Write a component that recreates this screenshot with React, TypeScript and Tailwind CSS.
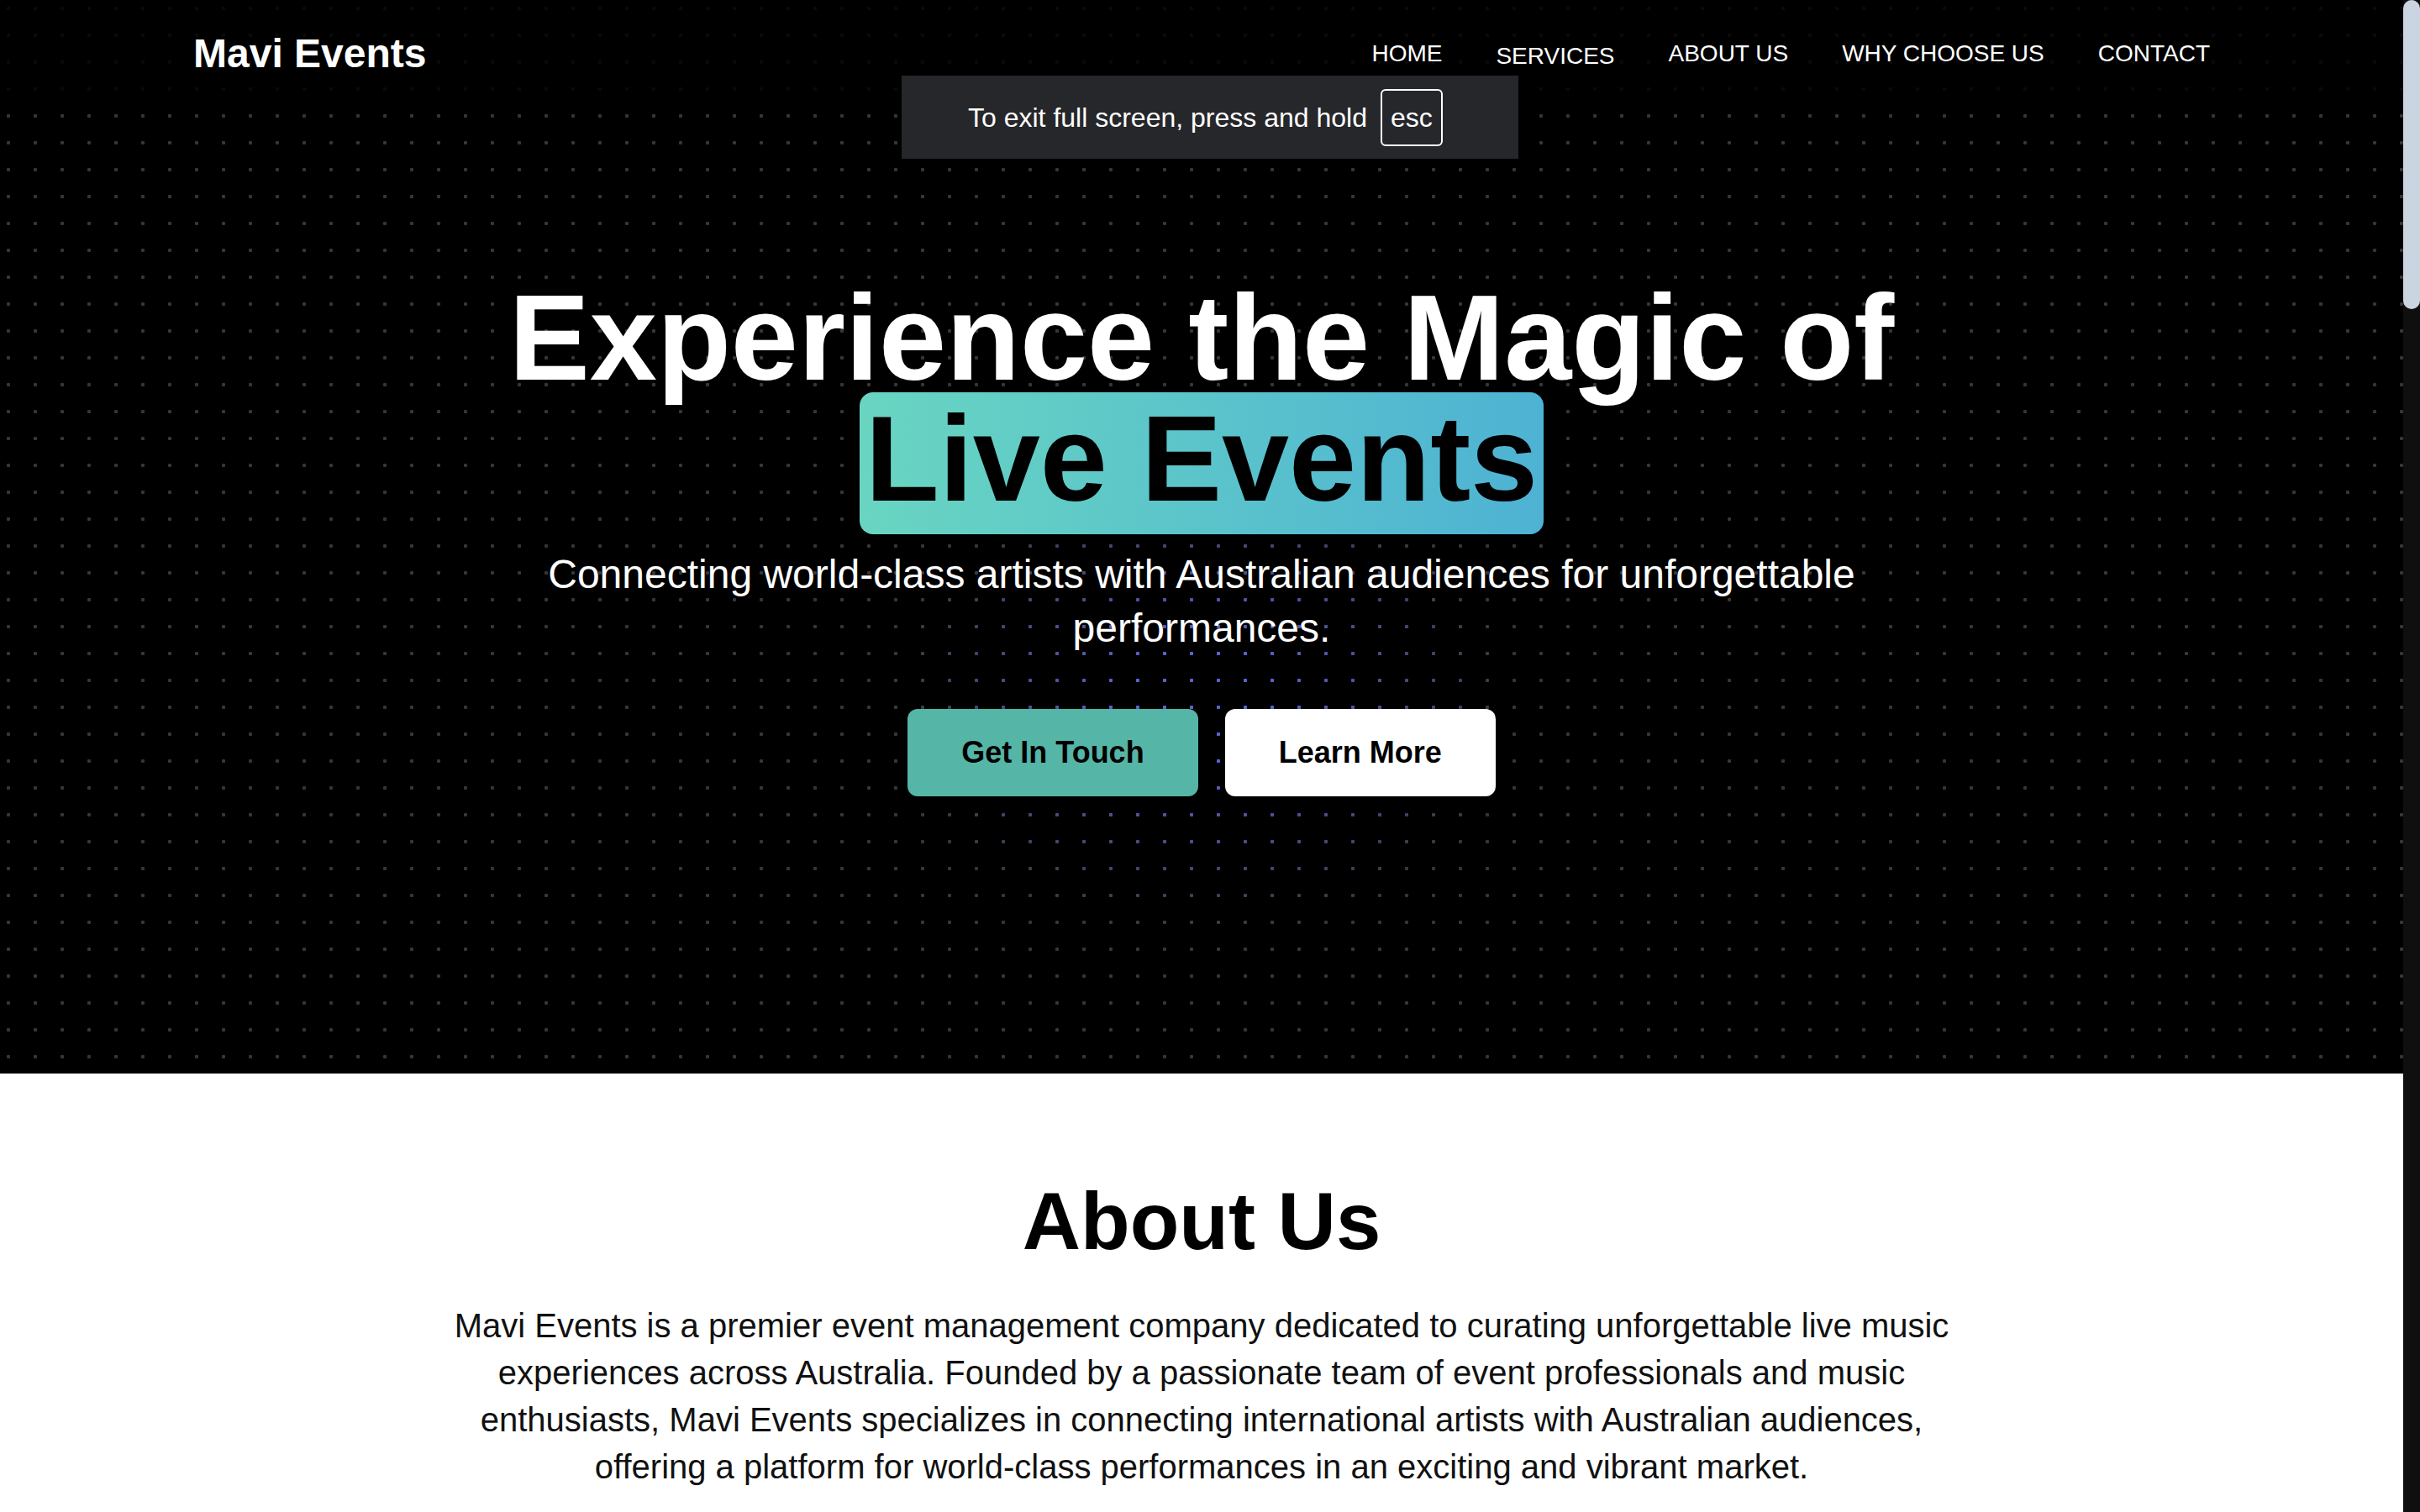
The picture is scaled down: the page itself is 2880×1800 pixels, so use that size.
import React from "react";

const navLinks = ["HOME", "SERVICES", "ABOUT US", "WHY CHOOSE US", "CONTACT"];

export default function App() {
  return (
    <div className="flex h-screen overflow-hidden bg-white font-['Liberation_Sans',Arial,sans-serif]">
      <main className="min-w-0 flex-1 overflow-hidden bg-white">
        {/* Hero */}
        <section className="relative flex h-[1278px] flex-col items-center justify-center overflow-hidden bg-black text-center">
          {/* dot grid + purple glow */}
          <div className="pointer-events-none absolute inset-0 bg-[radial-gradient(circle,#363636_2px,transparent_2.5px)] bg-[length:32px_32px] bg-[position:-6px_-6px]" />
          <div className="pointer-events-none absolute inset-0 bg-[radial-gradient(circle,#5c61d6_2px,transparent_2.5px)] bg-[length:32px_32px] bg-[position:-6px_-6px] [mask-image:radial-gradient(ellipse_380px_280px_at_50%_840px,black_25%,transparent_100%)]" />

          {/* Header */}
          <header className="absolute inset-x-0 top-0 z-10 h-[128px] bg-black/80">
            <div className="mx-auto flex h-full max-w-[2400px] items-center justify-between">
              <a href="#" className="text-[48px] font-bold text-white">
                Mavi Events
              </a>
              <nav className="flex items-center gap-16 text-[28px] text-white">
                {navLinks.map((l) => (
                  <a
                    key={l}
                    href="#"
                    className={l === "SERVICES" ? "translate-y-[3px]" : ""}
                  >
                    {l}
                  </a>
                ))}
              </nav>
            </div>
          </header>

          <div className="relative flex flex-col items-center">
            <h1 className="flex flex-col items-center text-[144px] font-bold leading-none text-white">
              <span className="block h-[136px]">Experience the Magic of</span>
              <span className="rounded-2xl bg-gradient-to-r from-[#69d5c1] to-[#4eb2d3] px-[7px] pb-[17px] pt-2 text-black">
                Live Events
              </span>
            </h1>
            <p className="mt-4 max-w-[1792px] text-[48px] leading-[64px] text-white">
              Connecting world-class artists with Australian audiences for
              unforgettable performances.
            </p>
            <div className="mt-16 flex gap-8">
              <button className="rounded-xl bg-[#55b5a6] px-16 py-6 text-[36px] font-bold leading-[56px] text-black">
                Get In Touch
              </button>
              <button className="rounded-xl bg-white px-16 py-6 text-[36px] font-bold leading-[56px] text-black">
                Learn More
              </button>
            </div>
          </div>
        </section>

        {/* About */}
        <section className="px-8 pb-32 pt-32 text-center">
          <h2 className="mb-12 text-[96px] font-bold leading-none text-black">
            About Us
          </h2>
          <p className="mx-auto max-w-[1792px] text-[40px] leading-[56px] text-[#111]">
            Mavi Events is a premier event management company dedicated to
            curating unforgettable live music experiences across Australia.
            Founded by a passionate team of event professionals and music
            enthusiasts, Mavi Events specializes in connecting international
            artists with Australian audiences, offering a platform for
            world-class performances in an exciting and vibrant market.
          </p>
        </section>
      </main>

      {/* page scrollbar */}
      <aside className="w-[20px] shrink-0 bg-[#0f0f0f]">
        <div className="h-[368px] rounded-full bg-[#cbd5e1]" />
      </aside>

      {/* browser full screen notice */}
      <div className="fixed left-1/2 top-[90px] z-50 flex h-[99px] w-[734px] -translate-x-1/2 items-center bg-[#26272b] pl-[79px] text-[32px] text-white">
        <span>To exit full screen, press and hold</span>
        <span className="ml-4 flex h-[68px] items-center rounded-md border-2 border-white px-[10px]">
          esc
        </span>
      </div>
    </div>
  );
}
